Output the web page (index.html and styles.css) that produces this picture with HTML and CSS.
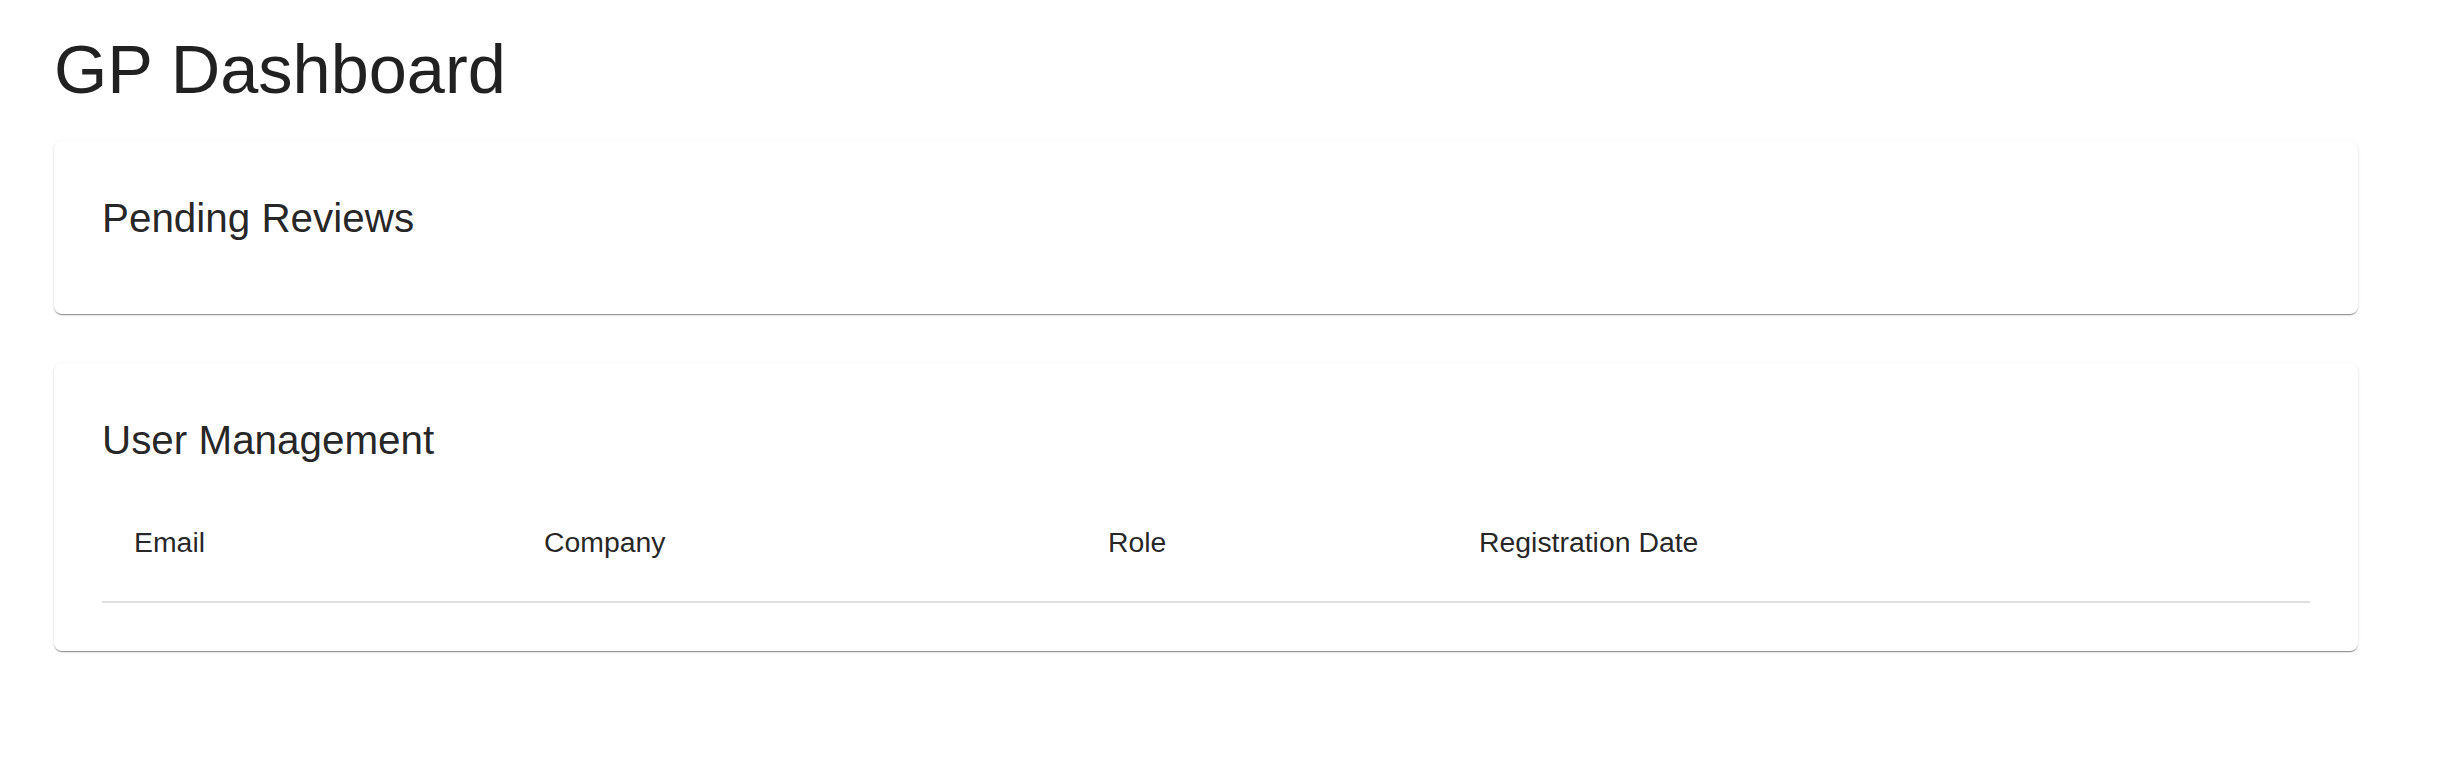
FILE: index.html
```html
<!DOCTYPE html>
<html lang="en">
<head>
<meta charset="utf-8">
<title>GP Dashboard</title>
<link rel="stylesheet" href="styles.css">
</head>
<body>
<main class="page">
  <h1 class="page-title">GP Dashboard</h1>
  <section class="card">
    <h2 class="card-title">Pending Reviews</h2>
  </section>
  <section class="card">
    <h2 class="card-title">User Management</h2>
    <table class="users">
      <colgroup>
        <col class="col-email">
        <col class="col-company">
        <col class="col-role">
        <col class="col-date">
      </colgroup>
      <thead>
        <tr>
          <th>Email</th>
          <th>Company</th>
          <th>Role</th>
          <th>Registration Date</th>
        </tr>
      </thead>
      <tbody></tbody>
    </table>
  </section>
</main>
</body>
</html>
```

FILE: styles.css
```css
html, body {
  margin: 0;
  padding: 0;
  background: #ffffff;
}

body {
  font-family: "Liberation Sans", Arial, Helvetica, sans-serif;
  color: rgba(0, 0, 0, 0.87);
}

.page {
  display: flex;
  flex-direction: column;
  gap: 49px;
  padding: 30px 82px 40px 54px;
}

.page-title {
  margin: 0 0 -18px 0;
  font-size: 68.5px;
  font-weight: 400;
  line-height: 80px;
}

.card {
  background: #ffffff;
  border-radius: 8px;
  padding: 48px;
  box-shadow: 0px 2px 1px -1px rgba(0, 0, 0, 0.28),
              0px 1px 1px 0px rgba(0, 0, 0, 0.16),
              0px 1px 3px 0px rgba(0, 0, 0, 0.12);
}

.card-title {
  margin: 0 0 19px 0;
  font-size: 40.4px;
  font-weight: 400;
  line-height: 58px;
}

.users {
  width: 100%;
  border-collapse: collapse;
  table-layout: fixed;
}

.col-email { width: 410px; }
.col-company { width: 564px; }
.col-role { width: 371px; }
.col-date { width: auto; }

.users th {
  text-align: left;
  font-size: 28.4px;
  font-weight: 400;
  line-height: 48px;
  padding: 30px 32px 35px 32px;
  border-bottom: 2px solid #e0e0e0;
}
```
